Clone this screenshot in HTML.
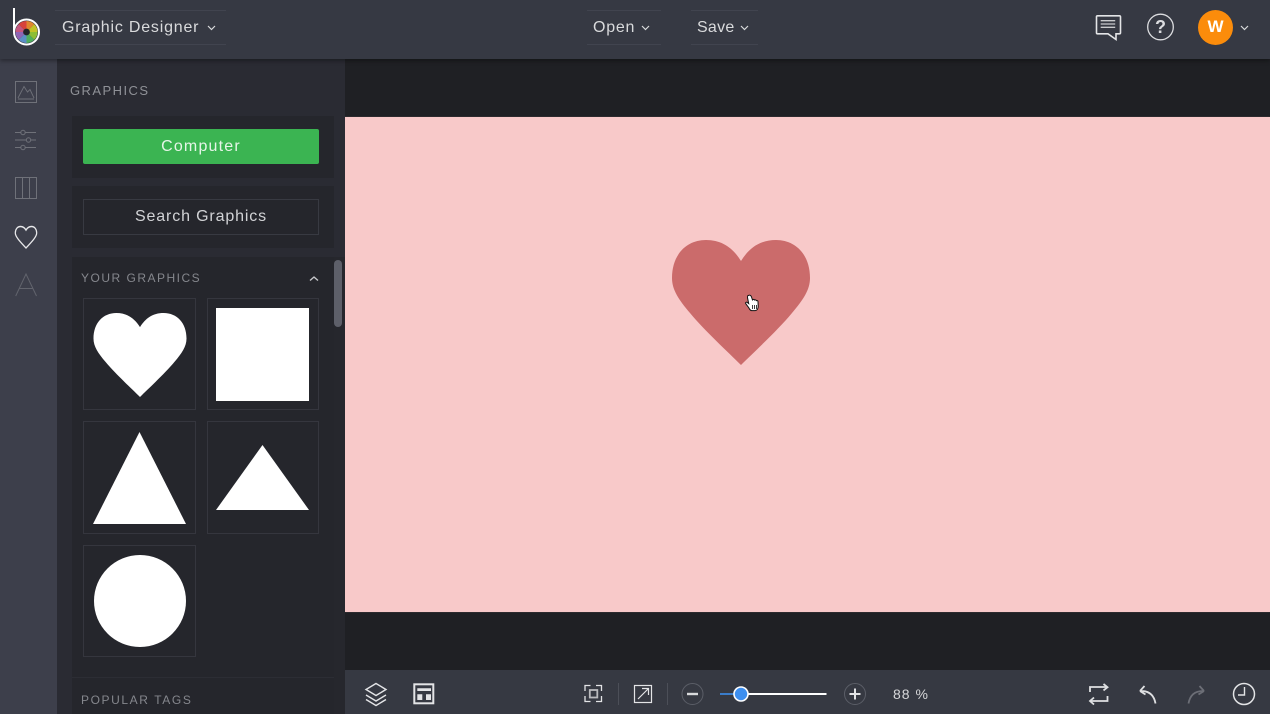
<!DOCTYPE html>
<html>
<head>
<meta charset="utf-8">
<style>
html,body{margin:0;padding:0;width:1270px;height:714px;overflow:hidden;background:#1f2024;font-family:"Liberation Sans",sans-serif}
.a{position:absolute}
.t{position:absolute;white-space:nowrap;line-height:20px}
svg{position:absolute;left:0;top:0;overflow:visible}
.cell{position:absolute;width:111px;height:110px;border:1px solid #35363e;box-sizing:border-box}
</style>
</head>
<body>
<div class="a" style="left:0;top:0;width:1270px;height:714px;overflow:hidden">
  <!-- canvas -->
  <div class="a" style="left:345px;top:59px;width:925px;height:611px;background:#1f2024"></div>
  <div class="a" style="left:345px;top:117px;width:925px;height:495px;background:#f8c9c9;box-shadow:0 0 1px #6a5c5e"></div>
  <!-- left rail -->
  <div class="a" style="left:0;top:59px;width:57px;height:655px;background:#3d3f4b"></div>
  <!-- sidebar -->
  <div class="a" style="left:57px;top:59px;width:288px;height:655px;background:#2a2b33"></div>
  <div class="a" style="left:334px;top:257px;width:11px;height:457px;background:#26272d"></div>
  <div class="a" style="left:72px;top:116px;width:262px;height:62px;background:#25262c"></div>
  <div class="a" style="left:72px;top:186px;width:262px;height:62px;background:#25262c"></div>
  <div class="a" style="left:72px;top:257px;width:262px;height:457px;background:#25262c"></div>
  <div class="a" style="left:72px;top:677px;width:262px;height:1px;background:#2c2d34"></div>
  <div class="t" style="left:70px;top:81px;font-size:13px;letter-spacing:1.45px;color:#8f9197">GRAPHICS</div>
  <div class="a" style="left:83px;top:129px;width:236px;height:35px;background:#3bb452;border-radius:2px"></div>
  <div class="t" style="left:83px;top:137px;width:236px;text-align:center;font-size:16px;letter-spacing:1.2px;color:#e6f5e8">Computer</div>
  <div class="a" style="left:83px;top:199px;width:236px;height:36px;border:1px solid #383a42;box-sizing:border-box"></div>
  <div class="t" style="left:83px;top:207px;width:236px;text-align:center;font-size:16px;letter-spacing:.85px;color:#d2d3d6">Search Graphics</div>
  <div class="t" style="left:81px;top:268px;font-size:12px;letter-spacing:1.5px;color:#85878d">YOUR GRAPHICS</div>
  <div class="t" style="left:81px;top:690px;font-size:12px;letter-spacing:1.6px;color:#85878d">POPULAR TAGS</div>
  <div class="a" style="left:334px;top:260px;width:8px;height:67px;background:#5d5f69;border-radius:4px"></div>
  <div class="cell" style="left:83px;top:298px;width:113px;height:112px"></div>
  <div class="cell" style="left:207px;top:298px;width:112px;height:112px"></div>
  <div class="cell" style="left:83px;top:421px;width:113px;height:113px"></div>
  <div class="cell" style="left:207px;top:421px;width:112px;height:113px"></div>
  <div class="cell" style="left:83px;top:545px;width:113px;height:112px"></div>
  <div class="a" style="left:216px;top:308px;width:93px;height:93px;background:#fff"></div>
  <!-- top bar -->
  <div class="a" style="left:0;top:0;width:1270px;height:59px;background:#363943;box-shadow:0 2px 4px rgba(0,0,0,.35)"></div>
  <div class="a" style="left:55px;top:10px;width:171px;height:1px;background:#41444f"></div>
  <div class="a" style="left:55px;top:44px;width:171px;height:1px;background:#41444f"></div>
  <div class="a" style="left:587px;top:10px;width:74px;height:1px;background:#41444f"></div>
  <div class="a" style="left:587px;top:44px;width:74px;height:1px;background:#41444f"></div>
  <div class="a" style="left:691px;top:10px;width:67px;height:1px;background:#41444f"></div>
  <div class="a" style="left:691px;top:44px;width:67px;height:1px;background:#41444f"></div>
  <div class="t" style="left:62px;top:18px;font-size:16px;letter-spacing:.8px;color:#d9dadc">Graphic Designer</div>
  <div class="t" style="left:593px;top:18px;font-size:16px;letter-spacing:.75px;color:#d9dadc">Open</div>
  <div class="t" style="left:697px;top:18px;font-size:16px;letter-spacing:.25px;color:#d9dadc">Save</div>
  <div class="a" style="left:1198px;top:10px;width:35px;height:35px;border-radius:50%;background:#fb8c0b"></div>
  <div class="t" style="left:1198px;top:17px;width:35px;text-align:center;font-size:17px;font-weight:bold;color:#fff">W</div>
  <!-- bottom bar -->
  <div class="a" style="left:345px;top:670px;width:925px;height:44px;background:#363942"></div>
  <div class="t" style="left:893px;top:684px;font-size:14px;letter-spacing:1px;color:#d6d7d9">88 %</div>

  <svg width="1270" height="714" viewBox="0 0 1270 714" fill="none">
    <!-- logo -->
    <g transform="translate(26.5,32)">
      <path d="M0 0L0-11A11 11 0 0 1 7.800-7.800Z" fill="#e0862d"/>
      <path d="M0 0L7.800-7.800A11 11 0 0 1 11 0Z" fill="#c3c326"/>
      <path d="M0 0L11 0A11 11 0 0 1 7.800 7.800Z" fill="#8dbe35"/>
      <path d="M0 0L7.800 7.800A11 11 0 0 1 0 11Z" fill="#4fae5d"/>
      <path d="M0 0L0 11A11 11 0 0 1-7.800 7.800Z" fill="#5c8fc6"/>
      <path d="M0 0L-7.800 7.800A11 11 0 0 1-11 0Z" fill="#8f64b5"/>
      <path d="M0 0L-11 0A11 11 0 0 1-7.800-7.800Z" fill="#c4577f"/>
      <path d="M0 0L-7.800-7.800A11 11 0 0 1 0-11Z" fill="#d8423b"/>
      <circle r="3.400" fill="#22242a"/>
    </g>
    <path d="M14 8V32A12.500 12.500 0 1 0 26.500 19.500A12.500 12.500 0 0 0 14 32" stroke="#fff" stroke-width="2"/>
    <!-- chevrons -->
    <g stroke="#d9dadc" stroke-width="1.200">
      <path d="M208 26l3.500 3.500 3.500-3.500"/>
      <path d="M642 26l3.500 3.500 3.500-3.500"/>
      <path d="M741 26l3.500 3.500 3.500-3.500"/>
      <path d="M1241 26l3.500 3.500 3.500-3.500"/>
    </g>
    <path d="M310 280.500l4-3.500 4 3.500" stroke="#c6c7ca" stroke-width="1.400"/>
    <!-- top right icons -->
    <path d="M1097.500 15.800h22a1 1 0 0 1 1 1v16a1 1 0 0 1-1 1h-3.500v5.700l-8-5.700h-10.500a1 1 0 0 1-1-1v-16a1 1 0 0 1 1-1z" stroke="#e4e5e7" stroke-width="1.600"/>
    <path d="M1100.700 20.700h14.500M1100.700 24h14.500M1100.700 27.300h14.500" stroke="#c9cacd" stroke-width="1.300"/>
    <circle cx="1160.500" cy="27" r="12.800" stroke="#dcdde0" stroke-width="1.300"/>
    <text x="1160.500" y="33" text-anchor="middle" font-family="Liberation Sans" font-size="18" font-weight="bold" fill="#dcdde0">?</text>
    <!-- rail icons -->
    <g stroke="#6f7179" stroke-width="1">
      <rect x="15.500" y="81.500" width="21" height="21"/>
      <path d="M18 98L24 86.500 27.500 92 30 89.500 34 98M18 99h16" stroke-width=".9"/>
      <path d="M15 132.500h21M15 140h21M15 147.500h21"/>
      <circle cx="23" cy="132.500" r="2.200" fill="#3d3f4b"/>
      <circle cx="28.500" cy="140" r="2.200" fill="#3d3f4b"/>
      <circle cx="23" cy="147.500" r="2.200" fill="#3d3f4b"/>
      <rect x="15.500" y="177.500" width="21" height="21"/>
      <path d="M22.500 177.500v21M29.500 177.500v21"/>
    </g>
    <path d="M15.700 296L26 274 36.500 296M19 288.500h14" stroke="#62646d" stroke-width="1"/>
    <path transform="translate(26,248) scale(.155,.172) translate(-741,-365)" d="M741 365C728 352 704 330 690 313C679 300 672 290 672 278C672 255 686 240 706 240C722 240 733 248 741 261C749 248 760 240 776 240C796 240 810 255 810 278C810 290 803 300 792 313C778 330 754 352 741 365Z" stroke="#e8e8ea" stroke-width="8"/>
    <!-- thumbnails -->
    <path transform="translate(140,397) scale(.674,.672) translate(-741,-365)" d="M741 365C728 352 704 330 690 313C679 300 672 290 672 278C672 255 686 240 706 240C722 240 733 248 741 261C749 248 760 240 776 240C796 240 810 255 810 278C810 290 803 300 792 313C778 330 754 352 741 365Z" fill="#fff"/>
    <path d="M139.500 432L186 524H93Z" fill="#fff"/>
    <path d="M262.500 445L309 510H216Z" fill="#fff"/>
    <circle cx="140" cy="601" r="46" fill="#fff"/>
    <!-- canvas heart -->
    <path d="M741 365C728 352 704 330 690 313C679 300 672 290 672 278C672 255 686 240 706 240C722 240 733 248 741 261C749 248 760 240 776 240C796 240 810 255 810 278C810 290 803 300 792 313C778 330 754 352 741 365Z" fill="#cb6b6b"/>
    <!-- cursor -->
    <path d="M748.500 295.500c1-1 2.500 0 3 1.500l1 3 .5-.5c1-.3 1.500.2 1.700.6 .7-.4 1.500-.2 1.700.5 .8-.3 1.500.2 1.600 1l.2 5c0 2-1.200 4-3 4h-3.500c-1 0-2-1-3-3l-3-4c-.5-1 .6-1.800 1.500-1.200l1.500 1.200-1.200-6c-.2-1 0-1.600 .5-2.100z" fill="#fff" stroke="#111" stroke-width="1"/>
    <path d="M752.500 305v4M754.500 305v4M756.500 305v4" stroke="#111" stroke-width=".8"/>
    <!-- bottom left icons -->
    <g stroke="#e3e4e6" stroke-width="1.400">
      <path d="M376 683.500l10 6-10 6-10-6z"/>
      <path d="M366 695l10 6 10-6"/>
      <path d="M366 699.500l10 6 10-6"/>
    </g>
    <rect x="414.300" y="684.300" width="19" height="19" stroke="#e3e4e6" stroke-width="2"/>
    <path d="M417.300 688.300h13.700v2.700h-13.700zM417.300 694.300h5v5.700h-5zM426 694.300h5v5.700h-5z" fill="#e3e4e6"/>
    <path d="M585 691v-5.500h5.500M596 685.500h5.500v5.500M601.500 696v5.500H596M590.500 701.500H585V696" stroke="#e3e4e6" stroke-width="1.300"/>
    <rect x="589.800" y="690" width="7.500" height="7.500" stroke="#b9babd" stroke-width="1.800"/>
    <rect x="618" y="683" width="1" height="22" fill="#4c4f58"/>
    <rect x="634.500" y="685.500" width="17" height="17" stroke="#e3e4e6" stroke-width="1.200"/>
    <path d="M638 699L648 689M642 688.500h6.500V695" stroke="#e3e4e6" stroke-width="1.200"/>
    <rect x="667" y="683" width="1" height="22" fill="#4c4f58"/>
    <!-- zoom -->
    <circle cx="692.500" cy="694" r="10.500" stroke="#5b5e67" stroke-width="1"/>
    <path d="M687 694h11" stroke="#d9dadc" stroke-width="2.400"/>
    <circle cx="855" cy="694" r="10.500" stroke="#5b5e67" stroke-width="1"/>
    <path d="M849.500 694h11M855 688.500v11" stroke="#e3e4e6" stroke-width="2"/>
    <path d="M720 694h21" stroke="#3a7cc9" stroke-width="2"/>
    <path d="M741 694h85.500" stroke="#fff" stroke-width="2"/>
    <circle cx="741" cy="694" r="7" fill="#3d8ff0" stroke="#fff" stroke-width="1.600"/>
    <!-- bottom right icons -->
    <g stroke="#dfe0e2" stroke-width="1.800">
      <path d="M1090 692v-5h17"/>
      <path d="M1103.500 684l4 3.200-4 3.200"/>
      <path d="M1107.500 696v5h-17"/>
      <path d="M1094 697.500l-4 3.500 4 3.500"/>
      <path d="M1140 691l4.500-5M1140 691l5.500 3.500M1141 691c8 0 13 4 14.500 12.500"/>
    </g>
    <g stroke="#6c6e76" stroke-width="1.800">
      <path d="M1204 691l-4.500-5M1204 691l-5.500 3.500M1203 691c-8 0-13 4-14.500 12.500"/>
    </g>
    <circle cx="1244" cy="694" r="10.500" stroke="#e3e4e6" stroke-width="1.500"/>
    <path d="M1244.500 687v8h-6.500" stroke="#e3e4e6" stroke-width="1.400"/>
  </svg>
</div>
</body>
</html>
